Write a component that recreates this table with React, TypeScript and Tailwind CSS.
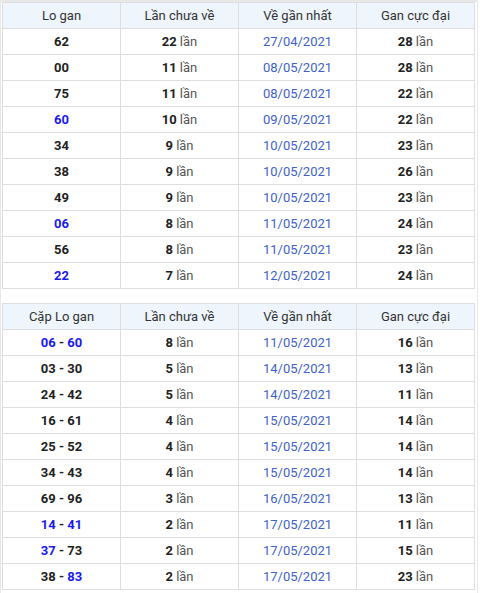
import React from "react";

type Part = { t: string; blue?: boolean };
type Row = { lo: Part[]; lan: string; date: string; max: string };

const p = (s: string): Part[] => {
  // format: "a|b" with ! for blue
  const [a, b] = s.split("-");
  if (b === undefined) return [{ t: a.replace("!", ""), blue: a.includes("!") }];
  return [
    { t: a.replace("!", ""), blue: a.includes("!") },
    { t: " - " },
    { t: b.replace("!", ""), blue: b.includes("!") },
  ];
};

const t1: Row[] = [
  { lo: p("62"), lan: "22", date: "27/04/2021", max: "28" },
  { lo: p("00"), lan: "11", date: "08/05/2021", max: "28" },
  { lo: p("75"), lan: "11", date: "08/05/2021", max: "22" },
  { lo: p("!60"), lan: "10", date: "09/05/2021", max: "22" },
  { lo: p("34"), lan: "9", date: "10/05/2021", max: "23" },
  { lo: p("38"), lan: "9", date: "10/05/2021", max: "26" },
  { lo: p("49"), lan: "9", date: "10/05/2021", max: "23" },
  { lo: p("!06"), lan: "8", date: "11/05/2021", max: "24" },
  { lo: p("56"), lan: "8", date: "11/05/2021", max: "23" },
  { lo: p("!22"), lan: "7", date: "12/05/2021", max: "24" },
];

const t2: Row[] = [
  { lo: p("!06-!60"), lan: "8", date: "11/05/2021", max: "16" },
  { lo: p("03-30"), lan: "5", date: "14/05/2021", max: "13" },
  { lo: p("24-42"), lan: "5", date: "14/05/2021", max: "11" },
  { lo: p("16-61"), lan: "4", date: "15/05/2021", max: "14" },
  { lo: p("25-52"), lan: "4", date: "15/05/2021", max: "14" },
  { lo: p("34-43"), lan: "4", date: "15/05/2021", max: "14" },
  { lo: p("69-96"), lan: "3", date: "16/05/2021", max: "13" },
  { lo: p("!14-!41"), lan: "2", date: "17/05/2021", max: "11" },
  { lo: p("!37-73"), lan: "2", date: "17/05/2021", max: "15" },
  { lo: p("38-!83"), lan: "2", date: "17/05/2021", max: "23" },
];

function Lan({ n }: { n: string }) {
  return (
    <>
      <span className="font-bold text-[#222]">{n}</span>
      <span className="text-[#555]"> lần</span>
    </>
  );
}

function Table({ first, rows }: { first: string; rows: Row[] }) {
  const th = "border border-[#dedede] bg-[#eef5fd] font-normal text-[#333] h-[26px] p-0 w-[118px]";
  const td = "border border-[#dedede] h-[26px] p-0 text-center";
  return (
    <table className="border-collapse w-[473px] text-[13px] table-fixed">
      <thead>
        <tr>
          <th className={th}>{first}</th>
          <th className={th}>Lần chưa về</th>
          <th className={th}>Về gần nhất</th>
          <th className={th}>Gan cực đại</th>
        </tr>
      </thead>
      <tbody>
        {rows.map((r, i) => (
          <tr key={i}>
            <td className={td + " font-bold"}>
              {r.lo.map((x, j) => (
                <span key={j} className={x.blue ? "text-[#1a1aee]" : "text-[#222]"}>
                  {x.t}
                </span>
              ))}
            </td>
            <td className={td}>
              <Lan n={r.lan} />
            </td>
            <td className={td + " text-[#3d62c9]"}>{r.date}</td>
            <td className={td}>
              <Lan n={r.max} />
            </td>
          </tr>
        ))}
      </tbody>
    </table>
  );
}

export default function App() {
  return (
    <div
      className="w-[478px] min-h-[593px] border-x border-t-2 border-[#e8e8e8] pl-[1px] bg-white"
      style={{ fontFamily: "Roboto, 'Liberation Sans', sans-serif" }}
    >
      <Table first="Lo gan" rows={t1} />
      <div className="h-[14px]" />
      <Table first="Cặp Lo gan" rows={t2} />
    </div>
  );
}
